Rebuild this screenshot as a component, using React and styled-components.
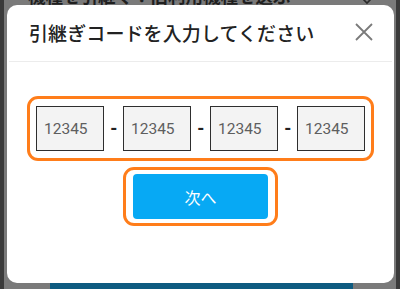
import React from "react";
import styled, { createGlobalStyle } from "styled-components";

const GlobalStyle = createGlobalStyle`
  html, body {
    margin: 0;
    padding: 0;
    background: #3a3a3a;
  }
  * {
    box-sizing: border-box;
  }
`;

const Screen = styled.div`
  position: relative;
  display: flex;
  width: 400px;
  height: 289px;
  padding: 0 4px;
  background: #3a3a3a;
  overflow: hidden;
  font-family: "Noto Sans CJK JP", "Noto Sans", sans-serif;
`;

const Backdrop = styled.div`
  flex: 1;
  display: flex;
  flex-direction: column;
  justify-content: space-between;
  background: #7a7a7a;
  overflow: hidden;
`;

const BgHeader = styled.div`
  display: flex;
  align-items: flex-end;
  justify-content: space-between;
  height: 5px;
  padding: 0 22px 0 24px;
  overflow: visible;
`;

const BgTitle = styled.div`
  font-size: 17.5px;
  font-weight: 700;
  line-height: 18px;
  color: #1f1f1f;
  white-space: nowrap;
`;

const BgButton = styled.div`
  width: 303px;
  height: 6px;
  margin-left: 46px;
  background: #0e5b80;
`;

const Modal = styled.div`
  position: absolute;
  top: 5px;
  left: 7px;
  width: 387px;
  height: 278px;
  display: flex;
  flex-direction: column;
  background: #fff;
  border-radius: 10px;
`;

const Header = styled.div`
  display: flex;
  align-items: center;
  justify-content: space-between;
  height: 57px;
  padding: 0 19px 2px 20px;
  border-bottom: 1px solid #ececec;
  margin: 0 2px;
`;

const Title = styled.h2`
  margin: 0;
  font-size: 19px;
  font-weight: 500;
  letter-spacing: 0.1px;
  color: #222;
`;

const CloseButton = styled.button`
  display: flex;
  padding: 0;
  border: 0;
  background: none;
  cursor: pointer;
`;

const Body = styled.div`
  display: flex;
  flex-direction: column;
  align-items: center;
  gap: 6px;
  padding-top: 34px;
`;

const Highlight = styled.div`
  display: flex;
  align-items: center;
  gap: ${(p) => p.$gap || 0}px;
  padding: ${(p) => p.$pad};
  border: 3px solid #ff7d1a;
  border-radius: 11px;
`;

const CodeInput = styled.input`
  width: 68px;
  height: 45px;
  padding: 0 0 0 7px;
  border: 1px solid #2e2e2e;
  background: #f3f3f3;
  font-family: Roboto, "Noto Sans", sans-serif;
  font-size: 15.5px;
  color: #555;
  outline: none;

  &::placeholder {
    color: #5e5e5e;
  }
`;

const Dash = styled.span`
  width: 7px;
  text-align: center;
  font-family: Roboto, sans-serif;
  font-size: 17px;
  font-weight: 900;
  color: #222;
  line-height: 1;
`;

const NextButton = styled.button`
  width: 135px;
  height: 45px;
  border: 0;
  border-radius: 4px;
  background: #07a9f4;
  color: #fff;
  font-family: "Noto Sans CJK JP", sans-serif;
  font-size: 16px;
  cursor: pointer;
`;

const CloseIcon = () => (
  <svg width="18" height="18" viewBox="0 0 18 18">
    <path d="M1 1 L17 17 M17 1 L1 17" stroke="#7a7a7a" strokeWidth="1.8" fill="none" />
  </svg>
);

const Chevron = () => (
  <svg width="14" height="5" viewBox="0 3 14 5">
    <path d="M1 0 L7 6 L13 0" stroke="#2a2a2a" strokeWidth="1.6" fill="none" />
  </svg>
);

const fields = [0, 1, 2, 3];

export default function App() {
  return (
    <Screen>
      <GlobalStyle />
      <Backdrop>
        <BgHeader>
          <BgTitle>機種を引継ぐ：旧利用機種を選ぶ</BgTitle>
          <Chevron />
        </BgHeader>
        <BgButton />
      </Backdrop>
      <Modal>
        <Header>
          <Title>引継ぎコードを入力してください</Title>
          <CloseButton aria-label="閉じる">
            <CloseIcon />
          </CloseButton>
        </Header>
        <Body>
          <Highlight $gap={6} $pad="7px 6px">
            {fields.map((i) => (
              <React.Fragment key={i}>
                {i > 0 && <Dash>-</Dash>}
                <CodeInput placeholder="12345" />
              </React.Fragment>
            ))}
          </Highlight>
          <Highlight $pad="4px 7px">
            <NextButton>次へ</NextButton>
          </Highlight>
        </Body>
      </Modal>
    </Screen>
  );
}
